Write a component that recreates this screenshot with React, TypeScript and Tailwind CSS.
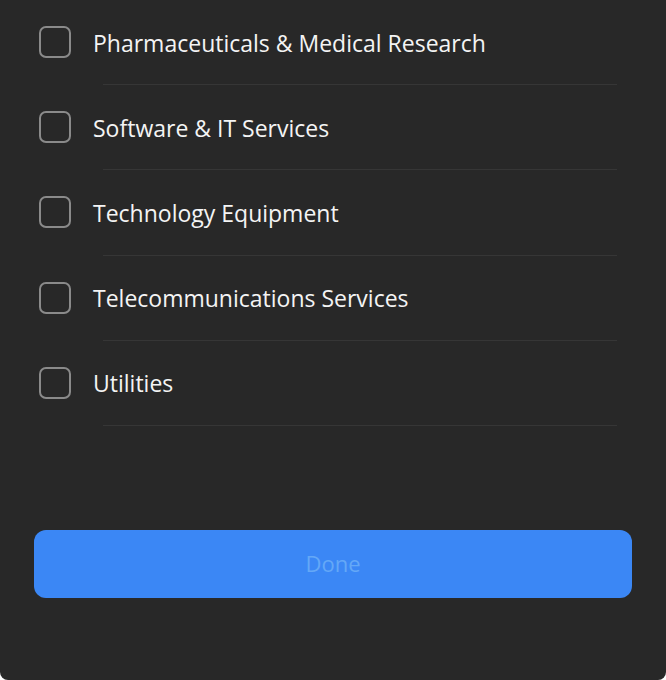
import React, { useState } from "react";

const SECTORS = [
  "Pharmaceuticals & Medical Research",
  "Software & IT Services",
  "Technology Equipment",
  "Telecommunications Services",
  "Utilities",
];

const App: React.FC = () => {
  const [checked, setChecked] = useState<string[]>([]);

  const toggle = (name: string) => {
    setChecked((prev) =>
      prev.includes(name) ? prev.filter((n) => n !== name) : [...prev, name]
    );
  };

  return (
    <div className="bg-white w-[666px] h-[680px]">
      <div
        className="w-full h-full bg-[#282828] rounded-b-[8px] flex flex-col"
        style={{ fontFamily: '"Open Sans", "Noto Sans", sans-serif' }}
      >
        <ul className="flex flex-col">
          {SECTORS.map((name) => (
            <li key={name} className="h-[85.2px] flex flex-col">
              <button
                onClick={() => toggle(name)}
                className="flex-1 flex items-center pl-[39px] text-left"
              >
                <span className="w-[32px] h-[32px] rounded-[7px] border-2 border-[#8a8a8a] flex items-center justify-center">
                  {checked.includes(name) && (
                    <svg width="18" height="18" viewBox="0 0 24 24" fill="none" stroke="#fff" strokeWidth="3">
                      <path d="M5 12l5 5L20 7" />
                    </svg>
                  )}
                </span>
                <span className="ml-[22px] pt-[2px] text-[23px] text-[#f4f4f4] leading-none">{name}</span>
              </button>
              {/* divider */}
              <div className="h-px bg-[#363636] ml-[103px] mr-[49px]" />
            </li>
          ))}
        </ul>

        <div className="px-[34px] mt-[104px]">
          <button className="w-full h-[68px] rounded-[12px] bg-[#3b87f5] text-[#64a8f7] text-[22px] font-medium">
            Done
          </button>
        </div>
      </div>
    </div>
  );
};

export default App;
